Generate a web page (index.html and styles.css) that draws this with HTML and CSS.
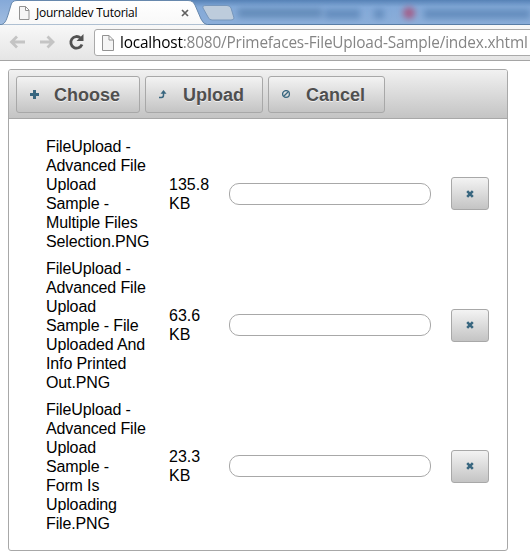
FILE: index.html
```html
<!DOCTYPE html>
<html lang="en">
<head>
<meta charset="utf-8">
<title>Journaldev Tutorial</title>
<link rel="stylesheet" href="styles.css">
</head>
<body>
<header class="browser">
  <div class="tabs">
    <svg class="tab-shapes" width="530" height="25" viewBox="0 0 530 25">
      <defs>
        <linearGradient id="strip" x2="0" y2="1"><stop stop-color="#5682b6"/><stop offset=".28" stop-color="#83a9d8"/><stop offset="1" stop-color="#8caed9"/></linearGradient>
        <linearGradient id="side" x2="0" y2="1"><stop stop-color="#85a9d8"/><stop offset="1" stop-color="#a1bde0"/></linearGradient>
        <linearGradient id="tab" x2="0" y2="1"><stop stop-color="#fff"/><stop offset="1" stop-color="#f8f8f8"/></linearGradient>
        <filter id="soft" x="-30%" y="-80%" width="160%" height="260%"><feGaussianBlur stdDeviation="3"/></filter>
      </defs>
      <rect width="530" height="25" fill="url(#strip)"/>
      <rect width="20" height="25" fill="url(#side)"/>
      <g filter="url(#soft)">
        <path d="M238 13H322" stroke="#5680ae" stroke-width="9" opacity=".75"/>
        <path d="M325 14H360M374 14H384M424 14H530" stroke="#5b85b6" stroke-width="9" opacity=".8"/>
        <circle cx="409" cy="13" r="6" fill="#a45b86"/>
      </g>
      <path d="M0 24.5H530" stroke="#587da6"/>
      <path d="M0 25C5 24 6 21 8 15L11 5Q12 .5 17 .5H188Q193 .5 195 5L201 19Q203 24 208 25Z" fill="url(#tab)" stroke="#6788ad"/>
      <path d="M206 5.5H227Q230 5.500 231 8L234 18Q234 20 231 20H212Q209 20 208 17L203 8Q202 5.500 206 5.500Z" fill="#bdccdc" stroke="#7797bc"/>
    </svg>
    <div class="tab-content">
      <svg width="12" height="14" viewBox="0 0 12 14"><path d="M1.500.500H7.500L11 4V13.500H1.500ZM7.500.500V4.500H11" fill="#f5f5f5" stroke="#929292"/></svg>
      <span class="tab-title">Journaldev Tutorial</span>
      <svg class="tab-close" width="8" height="8" viewBox="0 0 8 8"><path d="M1 1L7 7M7 1L1 7" stroke="#606060" stroke-width="1.700"/></svg>
    </div>
  </div>
  <div class="toolbar">
    <svg class="nav" width="84" height="20" viewBox="0 0 84 20">
      <g fill="none" stroke="#c4c4c4" stroke-width="2.800"><path d="M8 4.500L2.500 10L8 15.500M3 10H16"/><path d="M38.500 4.500L44 10L38.500 15.500M44 10H31"/></g>
      <path d="M71.500 6A5.800 5.800 0 1 0 73 12.500" fill="none" stroke="#525252" stroke-width="2.800"/><path d="M74.500 2V9H67.500Z" fill="#525252"/>
    </svg>
    <div class="address">
      <svg width="12" height="16" viewBox="0 0 12 16"><path d="M.500.500H7L11.500 5V15.500H.500ZM7 .500V5H11.500" fill="#f5f5f5" stroke="#929292"/></svg>
      <span class="url"><span class="host">localhost</span>:8080/Primefaces-FileUpload-Sample/index.xhtml</span>
    </div>
  </div>
</header>
<main class="upload">
  <div class="actions">
    <button class="button choose"><svg width="9" height="9" viewBox="0 0 9 9"><path d="M3 0H6V3H9V6H6V9H3V6H0V3H3Z" fill="#38667f"/></svg><span>Choose</span></button>
    <button class="button send"><svg width="9" height="9" viewBox="0 0 9 9"><path d="M0 7.500H2.500Q4.500 7.500 4.500 5V2" fill="none" stroke="#38667f" stroke-width="1.500"/><path d="M1.500 3.700L4.500 0L7.500 3.700Z" fill="#38667f"/></svg><span>Upload</span></button>
    <button class="button cancel"><svg width="9" height="9" viewBox="0 0 9 9"><circle cx="4" cy="4" r="3.400" fill="none" stroke="#38667f" stroke-width="1.300"/><path d="M2 6L6 2" stroke="#38667f" stroke-width="1.300"/></svg><span>Cancel</span></button>
  </div>
  <div class="files">
    <div class="file first">
      <div class="name">FileUpload -<br>Advanced File<br>Upload<br>Sample -<br>Multiple Files<br>Selection.PNG</div>
      <div class="size">135.8<br>KB</div><div class="progress"></div>
      <button class="remove" aria-label="Remove"><svg width="8" height="8" viewBox="0 0 8 8"><path d="M1.200 1.200L6.800 6.800M6.800 1.200L1.200 6.800" stroke="#38667f" stroke-width="2.600"/></svg></button>
    </div>
    <div class="file">
      <div class="name">FileUpload -<br>Advanced File<br>Upload<br>Sample - File<br>Uploaded And<br>Info Printed<br>Out.PNG</div>
      <div class="size">63.6<br>KB</div><div class="progress"></div>
      <button class="remove" aria-label="Remove"><svg width="8" height="8" viewBox="0 0 8 8"><path d="M1.200 1.200L6.800 6.800M6.800 1.200L1.200 6.800" stroke="#38667f" stroke-width="2.600"/></svg></button>
    </div>
    <div class="file">
      <div class="name">FileUpload -<br>Advanced File<br>Upload<br>Sample -<br>Form Is<br>Uploading<br>File.PNG</div>
      <div class="size">23.3<br>KB</div><div class="progress"></div>
      <button class="remove" aria-label="Remove"><svg width="8" height="8" viewBox="0 0 8 8"><path d="M1.200 1.200L6.800 6.800M6.800 1.200L1.200 6.800" stroke="#38667f" stroke-width="2.600"/></svg></button>
    </div>
  </div>
</main>
</body>
</html>
```
FILE: styles.css
```css
* { box-sizing: border-box; }
body { margin: 0; width: 530px; height: 556px; overflow: hidden; background: #fff; color: #000; font: 16px/19px "Liberation Sans", Arial, sans-serif; }
svg { display: block; flex: none; }
.browser { height: 61px; overflow: hidden; border-bottom: 1px solid #a5a5a5; }
.tabs { position: relative; height: 25px; }
.tab-shapes { position: absolute; inset: 0; }
.tab-content { position: relative; display: flex; align-items: center; height: 25px; padding: 1px 0 0 18px; }
.tab-title { width: 151px; padding-left: 6px; font: 12px/16px "Open Sans", sans-serif; letter-spacing: -0.25px; white-space: nowrap; }
.toolbar { display: flex; height: 35px; padding: 4px 0 0 9px; background: linear-gradient(#f8f8f8, #e5e5e5); }
.nav { margin-top: 3px; }
.address { display: flex; align-items: center; width: 450px; height: 27px; margin-left: 1px; flex: none; padding-left: 7px; border: 1px solid #aaa; border-radius: 3px 0 0 3px; background: #fff; }
.url { margin: 0 0 2px 6px; color: #858585; font: 17px/23px "Open Sans", sans-serif; letter-spacing: -0.2px; white-space: nowrap; transform: scaleX(.904); transform-origin: left center; }
.host { color: #000; }
.upload { width: 500px; height: 482px; margin: 8px 0 0 8px; border: 1px solid #a8a8a8; border-radius: 3px; }
.actions { display: flex; gap: 5px; height: 49px; padding: 6px 7px; border-bottom: 1px solid #a8a8a8; border-radius: 2px 2px 0 0; background: linear-gradient(#f1f1f1, #c4c4c4); }
.button, .remove { border: 1px solid #a8a8a8; border-radius: 3px; background: linear-gradient(#f3f3f3, #c4c4c4); }
.button { display: flex; align-items: center; height: 37px; padding: 0 0 0 13px; color: #4f4f4f; font: bold 18px/22px "Liberation Sans", Arial, sans-serif; text-shadow: 0 1px 0 rgba(255,255,255,.7); }
.button span { margin-left: 15px; }
.choose { width: 124px; }
.send { width: 118px; }
.cancel { width: 117px; }
.files { display: flex; flex-direction: column; gap: 8px; padding: 18px 0 0 37px; }
.file { display: grid; grid-template-columns: 123px 60px 202px 58px; align-items: center; }
.name, .size { white-space: nowrap; }
.name { letter-spacing: -0.13px; }
.size { padding-bottom: 1px; }
.progress { height: 22px; margin-bottom: 1px; border: 1px solid #a8a8a8; border-radius: 10px; }
.remove { display: flex; align-items: center; justify-content: center; width: 38px; height: 33px; margin: 0 0 1px 20px; padding: 0; }
.first .size { padding-bottom: 0; }
.first .progress { margin-bottom: 0; }
```
